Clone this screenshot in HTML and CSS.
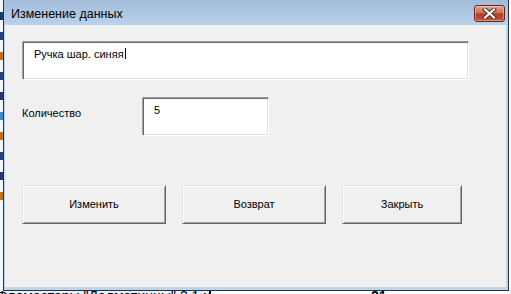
FILE: index.html
```html
<!DOCTYPE html>
<html lang="ru">
<head>
<meta charset="utf-8">
<title>Изменение данных</title>
<link rel="stylesheet" href="styles.css">
</head>
<body>
<div class="sheet">
  <div class="sheet-left">
    <i class="m c1"></i><i class="m c2"></i><i class="m c3"></i><i class="m c2"></i><i class="m c1"></i><i class="m c4"></i><i class="m c3"></i><i class="m c2"></i><i class="m c1"></i><i class="m c3"></i>
  </div>
  <div class="sheet-bottom">
    <span class="cell-a">Фломастеры "Далматинцы" 2 1 цв.</span>
    <span class="cell-b"></span>
    <span class="cell-c">21</span>
  </div>
</div>

<div class="window">
  <div class="titlebar">
    <span class="title">Изменение данных</span>
    <button class="close" type="button" aria-label="Закрыть">
      <svg width="19" height="11" viewBox="0 0 19 11">
        <path d="M5 1.5 L14 9.5 M14 1.5 L5 9.5" stroke="#4a2a2a" stroke-width="4" stroke-linecap="square"/>
        <path d="M5 1.5 L14 9.5 M14 1.5 L5 9.5" stroke="#ffffff" stroke-width="2.2" stroke-linecap="square"/>
      </svg>
    </button>
  </div>
  <div class="client">
    <div class="field wide">Ручка шар. синяя<span class="caret"></span></div>
    <div class="row">
      <span class="label">Количество</span>
      <div class="field small">5</div>
    </div>
    <div class="buttons">
      <button class="btn" type="button">Изменить</button>
      <button class="btn" type="button">Возврат</button>
      <button class="btn narrow" type="button">Закрыть</button>
    </div>
  </div>
</div>
</body>
</html>
```

FILE: styles.css
```css
* { box-sizing: border-box; }

html, body {
  margin: 0;
  padding: 0;
  width: 511px;
  height: 294px;
  overflow: hidden;
  background: #ffffff;
  font-family: "Liberation Sans", Arial, sans-serif;
  font-size: 11px;
  color: #000;
}

body { position: relative; }

/* Excel sheet visible behind the dialog */
.sheet {
  position: absolute;
  inset: 0;
  background: #ffffff;
}

.sheet-left {
  display: flex;
  flex-direction: column;
  gap: 12px;
  width: 3px;
  padding-top: 12px;
  background: #f4f6fa;
  height: 288px;
}
.m {
  display: block;
  width: 3px;
  height: 8px;
}
.c1 { background: #1f3a70; }
.c2 { background: #2b3f7a; }
.c3 { background: #c0701f; }
.c4 { background: #3a8bd0; }

.sheet-bottom {
  position: absolute;
  left: 0;
  top: 289px;
  width: 511px;
  height: 14px;
  display: flex;
  font-size: 14px;
  line-height: 14px;
}
.cell-a {
  width: 212px;
  margin-left: -3px;
  white-space: nowrap;
  overflow: hidden;
  background: #e9edf4;
}
.cell-b {
  width: 2px;
  background: #000;
}
.cell-c {
  margin-left: 160px;
  font-weight: bold;
}

/* Dialog window */
.window {
  position: absolute;
  left: 3px;
  top: 0;
  width: 506px;
  height: 291px;
  border: 1px solid #2a3440;
  border-top: none;
  background: #bcd4ec;
  display: flex;
  flex-direction: column;
  padding: 0 1px 1px 1px;
}

.titlebar {
  height: 25px;
  flex: none;
  display: flex;
  align-items: center;
  justify-content: space-between;
  background: linear-gradient(#a1bcd9, #b0c9e3 60%, #bad2ea);
  margin: 0 -1px;
  padding: 0 3px 0 7px;
}

.title {
  font-family: "Liberation Sans", Arial, sans-serif;
  font-size: 12.5px;
  color: #000;
  margin-top: 2px;
}

.close {
  width: 31px;
  height: 17px;
  margin-top: 1px;
  padding: 0;
  border: 1px solid #5e2a22;
  border-radius: 3px;
  background: linear-gradient(#e3a595, #cf6e5a 45%, #b63a22 55%, #c65a3f);
  box-shadow: inset 0 0 0 1px rgba(255, 220, 210, 0.45);
  display: flex;
  align-items: center;
  justify-content: center;
}
.close svg { display: block; }

.client {
  flex: 1;
  background: #f0f0f0;
  padding: 16px 0 0 17px;
  display: flex;
  flex-direction: column;
  border-bottom: 2px solid #bcd4ec;
  border-right: 1px solid #bcd4ec;
}

.field {
  background: #fff;
  border: 1px solid;
  border-color: #a0a0a0 #ffffff #ffffff #a0a0a0;
  box-shadow: inset 1px 1px #696969, inset -1px -1px #e3e3e3;
  height: 39px;
  font-size: 11px;
  line-height: 13px;
  padding: 6px 0 0 11px;
}
.wide { width: 447px; }
.small { width: 127px; padding-top: 6px; }

.caret {
  display: inline-block;
  width: 1px;
  height: 11px;
  background: #000;
  vertical-align: -1px;
  margin-left: 1px;
}

.row {
  display: flex;
  align-items: flex-start;
  margin-top: 17px;
}
.label {
  width: 120px;
  margin-top: 10px;
  line-height: 13px;
}

.buttons {
  display: flex;
  gap: 16px;
  margin-top: 49px;
}

.btn {
  width: 144px;
  height: 39px;
  font-family: "Liberation Sans", Arial, sans-serif;
  font-size: 11px;
  color: #000;
  background: #f0f0f0;
  border: 1px solid;
  border-color: #e3e3e3 #696969 #696969 #e3e3e3;
  box-shadow: inset 1px 1px #ffffff, inset -1px -1px #a0a0a0;
  padding: 0 0 2px 0;
}
.narrow { width: 120px; }
```
